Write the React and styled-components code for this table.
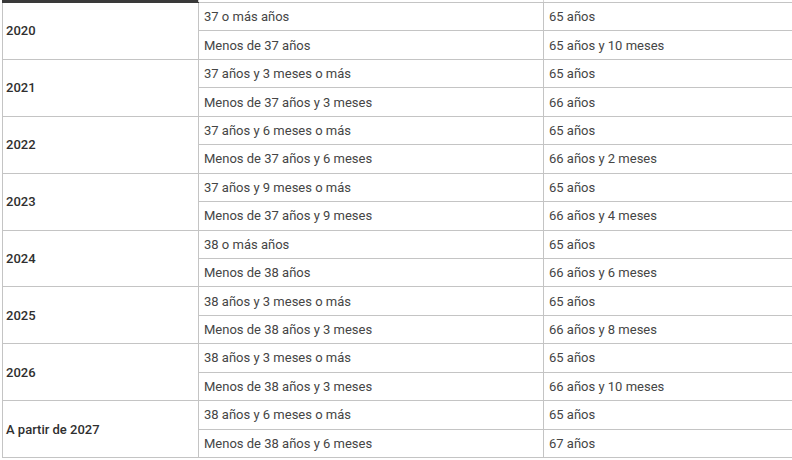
import React from 'react'
import styled, { createGlobalStyle } from 'styled-components';

const GlobalStyle = createGlobalStyle`
  body {
    margin: 0;
    background: #ffffff;
    font-family: Roboto, "Liberation Sans", sans-serif;
    overflow: hidden;
  }
`;

const Wrap = styled.div`
  padding-left: 2px;
  width: 820px;
`;

const Table = styled.table`
  border-collapse: collapse;
  table-layout: fixed;
  width: 818px;
  font-size: 13px;
  color: #454545;
`;

const HeadCell = styled.th`
  height: 2px;
  padding: 0;
  background: ${p => (p.$dark ? '#3a3a3a' : '#ffffff')};
  border-bottom: 1px solid ${p => (p.$dark ? '#3a3a3a' : '#c4c4c4')};
  border-left: 1px solid ${p => (p.$dark ? '#3a3a3a' : '#d4d4d4')};
`;

const Row = styled.tr`
  height: 28.45px;
`;

const Year = styled.td`
  font-weight: 500;
  color: #2f2f2f;
  padding: 0 3px;
  border: 1px solid #c4c4c4;
  vertical-align: middle;
`;

const Cell = styled.td`
  padding: 0 5px;
  border: 1px solid #c4c4c4;
  vertical-align: middle;
  white-space: nowrap;
`;

const data = [
  ['2020', '37 o más años', '65 años', 'Menos de 37 años', '65 años y 10 meses'],
  ['2021', '37 años y 3 meses o más', '65 años', 'Menos de 37 años y 3 meses', '66 años'],
  ['2022', '37 años y 6 meses o más', '65 años', 'Menos de 37 años y 6 meses', '66 años y 2 meses'],
  ['2023', '37 años y 9 meses o más', '65 años', 'Menos de 37 años y 9 meses', '66 años y 4 meses'],
  ['2024', '38 o más años', '65 años', 'Menos de 38 años', '66 años y 6 meses'],
  ['2025', '38 años y 3 meses o más', '65 años', 'Menos de 38 años y 3 meses', '66 años y 8 meses'],
  ['2026', '38 años y 3 meses o más', '65 años', 'Menos de 38 años y 3 meses', '66 años y 10 meses'],
  ['A partir de 2027', '38 años y 6 meses o más', '65 años', 'Menos de 38 años y 6 meses', '67 años'],
];

const App = () => {
  return (
    <Wrap>
      <GlobalStyle />
      <Table>
        <colgroup>
          <col style={{ width: 196 }} />
          <col style={{ width: 345 }} />
          <col />
        </colgroup>
        <thead>
          <tr>
            <HeadCell $dark />
            <HeadCell />
            <HeadCell />
          </tr>
        </thead>
        <tbody>
          {data.map(([year, a, aAge, b, bAge]) => (
            <React.Fragment key={year}>
              <Row>
                <Year rowSpan={2}>{year}</Year>
                <Cell>{a}</Cell>
                <Cell>{aAge}</Cell>
              </Row>
              <Row>
                <Cell>{b}</Cell>
                <Cell>{bAge}</Cell>
              </Row>
            </React.Fragment>
          ))}
        </tbody>
      </Table>
    </Wrap>
  )
}

export default App
